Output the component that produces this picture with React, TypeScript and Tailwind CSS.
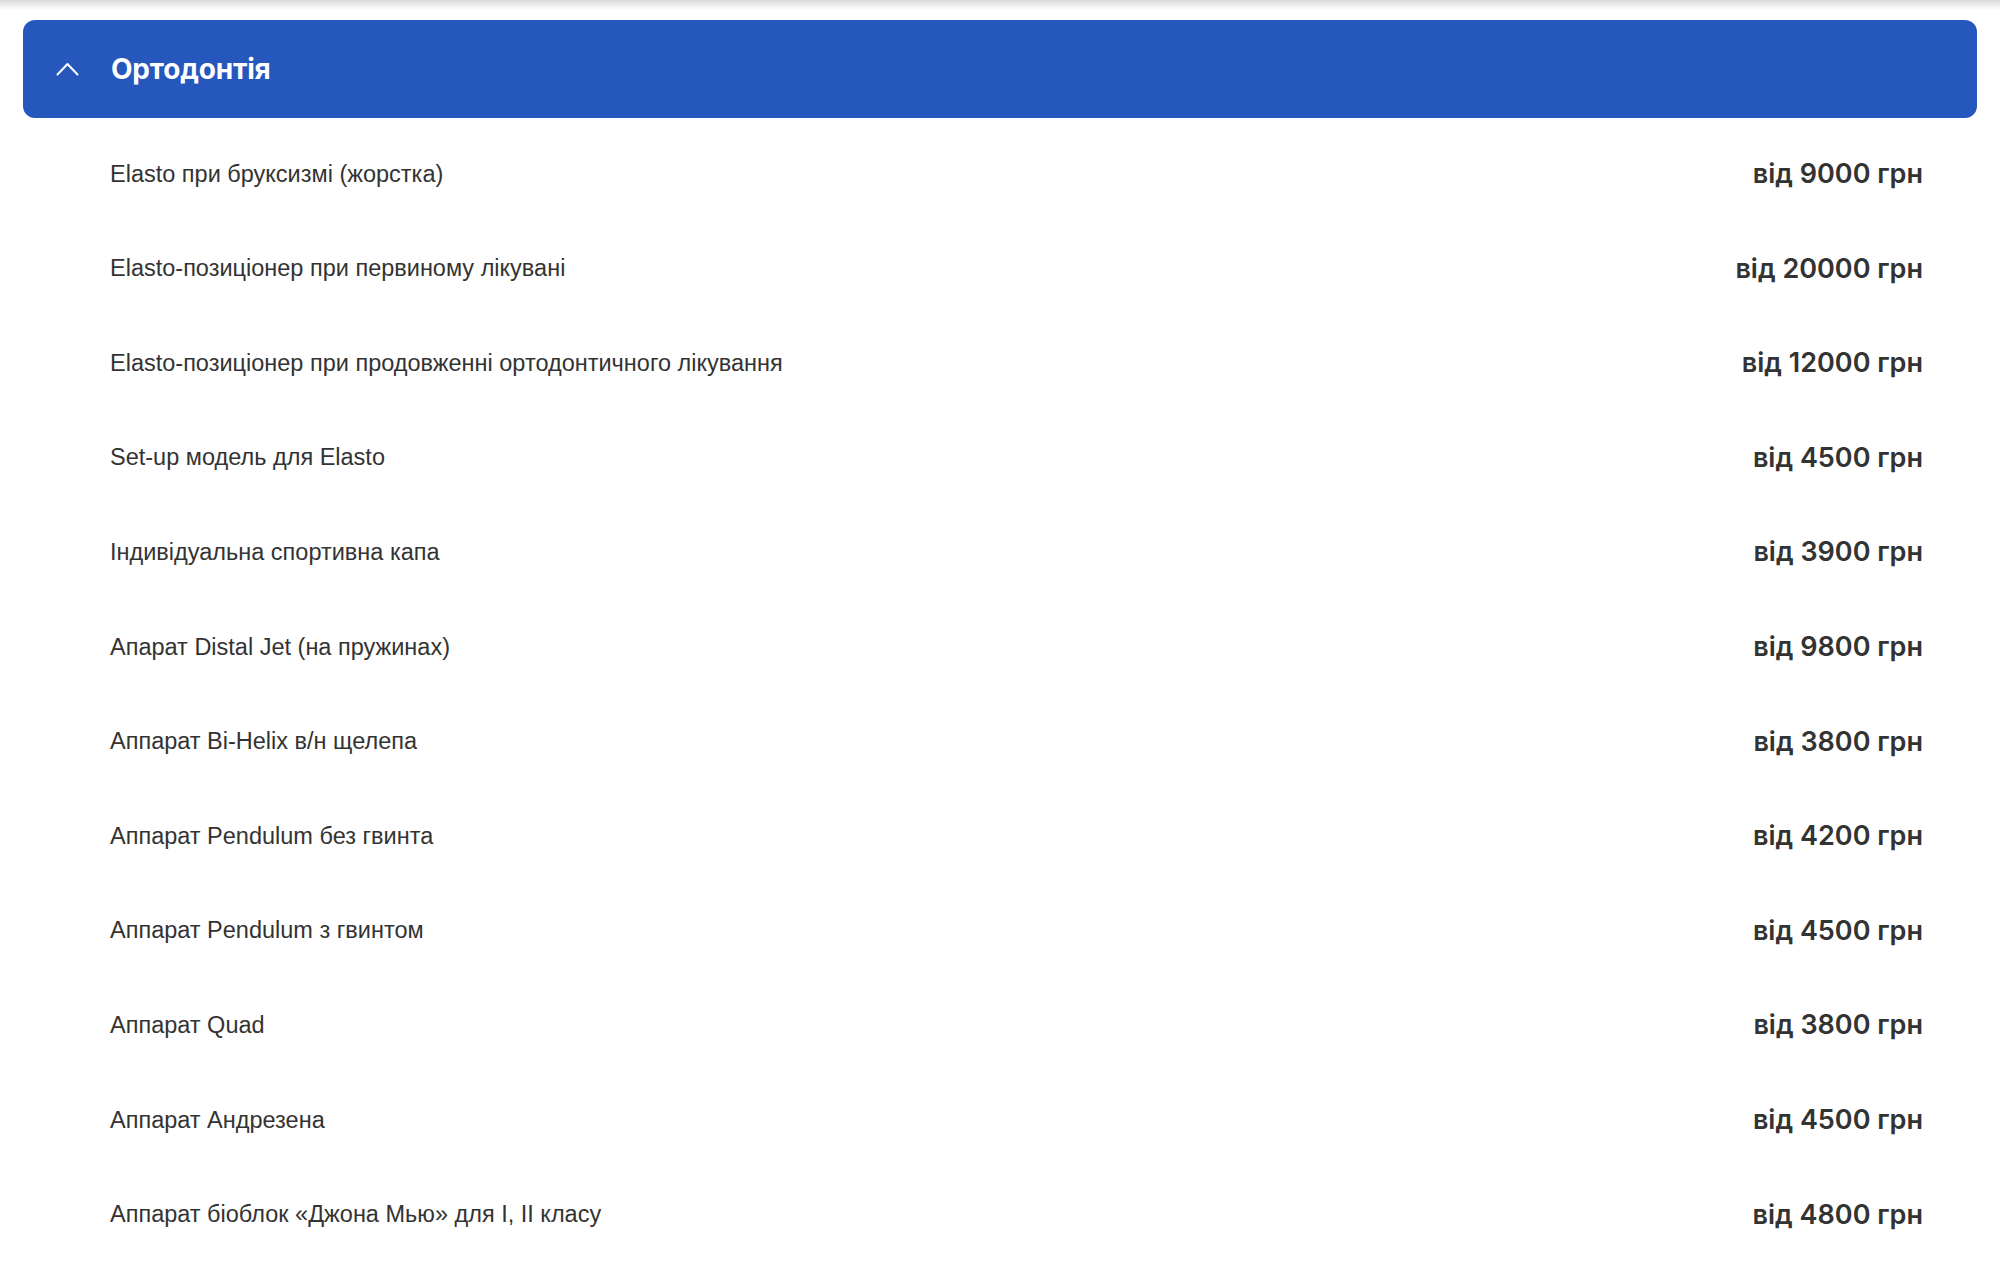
import React from "react";

const items: { name: string; price: string }[] = [
	{ name: "Elasto при бруксизмі (жорстка)", price: "від 9000 грн" },
	{ name: "Elasto-позиціонер при первиному лікувані", price: "від 20000 грн" },
	{ name: "Elasto-позиціонер при продовженні ортодонтичного лікування", price: "від 12000 грн" },
	{ name: "Set-up модель для Elasto", price: "від 4500 грн" },
	{ name: "Індивідуальна спортивна капа", price: "від 3900 грн" },
	{ name: "Апарат Distal Jet (на пружинах)", price: "від 9800 грн" },
	{ name: "Аппарат Bi-Helix в/н щелепа", price: "від 3800 грн" },
	{ name: "Аппарат Pendulum без гвинта", price: "від 4200 грн" },
	{ name: "Аппарат Pendulum з гвинтом", price: "від 4500 грн" },
	{ name: "Аппарат Quad", price: "від 3800 грн" },
	{ name: "Аппарат Андрезена", price: "від 4500 грн" },
	{ name: "Аппарат біоблок «Джона Мью» для I, II класу", price: "від 4800 грн" },
];

export default function App() {
	return (
		<div className="relative w-[2000px] h-[1280px] overflow-hidden bg-white">
			{/* тінь від верхнього блоку */}
			<div className="absolute top-0 left-0 w-full h-[10px] bg-gradient-to-b from-[#d9d9d9] to-white" />

			<div className="px-[23px] pt-[20px]">
				<button className="flex items-center w-full h-[98px] rounded-[12px] bg-[#2557bc] text-white">
					<span className="flex justify-center w-[88px]">
						<svg width="23" height="14" viewBox="0 0 23 14" fill="none">
							<path d="M1.5 12.5 11.5 2 21.5 12.5" stroke="white" strokeWidth="2" strokeLinecap="round" strokeLinejoin="round" />
						</svg>
					</span>
					<span className="text-[28px] font-bold font-['Inter',sans-serif] tracking-[-0.2px]">Ортодонтія</span>
				</button>

				<ul className="mt-[9px]">
					{items.map((item) => (
						<li
							key={item.name}
							className="flex items-center justify-between h-[94.6px] pl-[87px] pr-[54px] text-[#333333]"
						>
							<span className="text-[23.5px] font-['Liberation_Sans',Arial,sans-serif]">{item.name}</span>
							<span className="text-[27px] font-semibold font-['Inter',sans-serif]">{item.price}</span>
						</li>
					))}
				</ul>
			</div>
		</div>
	);
}
